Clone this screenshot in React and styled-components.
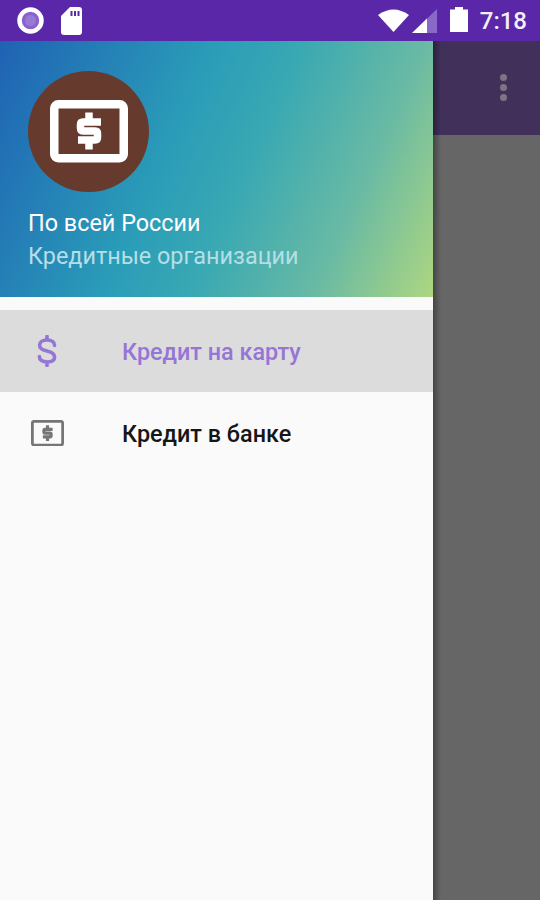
import React from "react";
import styled, { createGlobalStyle } from "styled-components";

const GlobalStyle = createGlobalStyle`
  html, body { margin: 0; padding: 0; background: #666; }
  * { box-sizing: border-box; }
`;

function CardIcon({ width, color, frame }) {
  return (
    <svg width={width} height={width * 0.8} viewBox="0 0 78 62.4" fill="none">
      <rect x={frame / 2} y={frame / 2} width={78 - frame} height={62.4 - frame} rx="4" stroke={color} strokeWidth={frame} />
      <path d="M51 22 H33 Q30.5 22 30.5 24.5 V28 Q30.5 31 33 31 H45 Q47.5 31 47.5 33.5 V37.5 Q47.5 40 45 40 H28 M39 12.5 V22 M39 40 V49.5" stroke={color} strokeWidth="7.5" />
    </svg>
  );
}

function DollarIcon() {
  return (
    <svg width="20" height="32" viewBox="0 0 20 32" fill="none">
      <path d="M17.6 10.4 C17.6 7 14.6 5 10 5 C5.4 5 2.6 7 2.6 10.2 C2.6 13.6 5.4 15 10 16 C14.6 17 17.6 18.6 17.6 22 C17.6 25.2 14.6 27 10 27 C5.4 27 2.4 25 2.4 21.6 M10 1.5 V5 M10 27 V30.5" stroke="#9575d6" strokeWidth="3.6" strokeLinecap="round" />
    </svg>
  );
}

export default function App() {
  return (
    <Page>
      <GlobalStyle />
      <StatusBar>
        <StatusLeft>
          <svg width="27" height="27" viewBox="0 0 27 27">
            <circle cx="13.5" cy="13.5" r="11" fill="#8a62cc" stroke="#fff" strokeWidth="4.5" />
            <circle cx="13.5" cy="13.5" r="5.5" fill="#9a78d6" />
          </svg>
          <svg width="21" height="28" viewBox="0 0 21 28">
            <path d="M9 0 H18 Q21 0 21 3 V25 Q21 28 18 28 H3 Q0 28 0 25 V9 Z" fill="#fff" />
            <path d="M10.5 4 V9 M14 4 V9 M17.5 4 V9" stroke="#5a27a8" strokeWidth="2" />
          </svg>
        </StatusLeft>
        <StatusRight>
          <svg width="31" height="23" viewBox="0 0 31 23">
            <path d="M0 6 Q15.5 -5 31 6 L15.5 23 Z" fill="#fff" />
          </svg>
          <SignalIcon width="25" height="24" viewBox="0 0 25 24">
            <path d="M0 24 L25 0 V24 Z" fill="#8a68c8" />
            <path d="M0 24 L15 9.6 V24 Z" fill="#fff" />
          </SignalIcon>
          <BatteryIcon width="18" height="25" viewBox="0 0 18 25">
            <path d="M5 0 H13 V2.5 H18 V25 H0 V2.5 H5 Z" fill="#fff" />
          </BatteryIcon>
          <Clock>7:18</Clock>
        </StatusRight>
      </StatusBar>
      <Body>
        <Drawer>
          <DrawerHeader>
            <Avatar>
              <CardIcon width={78} color="#fff" frame={8.5} />
            </Avatar>
            <HeaderTitle>По всей России</HeaderTitle>
            <HeaderSubtitle>Кредитные организации</HeaderSubtitle>
          </DrawerHeader>
          <Menu>
            <MenuItem $active>
              <MenuIcon $inset><DollarIcon /></MenuIcon>
              <MenuLabel $active>Кредит на карту</MenuLabel>
            </MenuItem>
            <MenuItem>
              <MenuIcon><CardIcon width={33} color="#757575" frame={6.5} /></MenuIcon>
              <MenuLabel>Кредит в банке</MenuLabel>
            </MenuItem>
          </Menu>
        </Drawer>
        <Backdrop>
          <AppBar>
            <MoreDots>
              <Dot />
              <Dot />
              <Dot />
            </MoreDots>
          </AppBar>
          <Scrim />
        </Backdrop>
      </Body>
    </Page>
  );
}

const Page = styled.div`
  width: 540px;
  height: 900px;
  display: flex;
  flex-direction: column;
  overflow: hidden;
  font-family: Roboto, "Noto Sans", sans-serif;
`;
const StatusBar = styled.div`
  height: 41px;
  flex: none;
  display: flex;
  align-items: center;
  justify-content: space-between;
  padding: 0 13px 0 17px;
  background: #5a27a8;
`;
const StatusLeft = styled.div`
  display: flex;
  align-items: center;
  gap: 17px;
`;
const StatusRight = styled.div`
  display: flex;
  align-items: center;
`;
const SignalIcon = styled.svg`
  margin-left: 3px;
`;
const BatteryIcon = styled.svg`
  margin-left: 13px;
  margin-top: -3px;
`;
const Clock = styled.span`
  margin-left: 12px;
  font-size: 24px;
  font-weight: 500;
  color: #f4effa;
`;
const Body = styled.div`
  flex: 1;
  display: flex;
  min-height: 0;
`;
const Drawer = styled.div`
  width: 433px;
  flex: none;
  display: flex;
  flex-direction: column;
  background: #fafafa;
`;
const DrawerHeader = styled.div`
  height: 256px;
  padding: 30px 0 0 28px;
  display: flex;
  flex-direction: column;
  background: linear-gradient(114deg, #1f62b4 0%, #2a9cb8 39%, #38a8b3 55%, #69baa4 78%, #aed680 100%);
`;
const Avatar = styled.div`
  width: 121px;
  height: 121px;
  border-radius: 50%;
  display: flex;
  align-items: center;
  justify-content: center;
  background: #663a2d;
`;
const HeaderTitle = styled.div`
  margin-top: 17px;
  font-size: 23.4px;
  line-height: 28px;
  color: #fff;
`;
const HeaderSubtitle = styled.div`
  margin-top: 5px;
  font-size: 23.4px;
  line-height: 28px;
  color: #b5dfe6;
`;
const Menu = styled.div`
  padding-top: 13px;
  display: flex;
  flex-direction: column;
`;
const MenuItem = styled.div`
  height: 82px;
  padding-left: 31px;
  display: flex;
  align-items: center;
  background: ${(p) => (p.$active ? "#dcdcdc" : "transparent")};
`;
const MenuIcon = styled.div`
  width: 91px;
  flex: none;
  display: flex;
  align-items: center;
  padding-left: ${(p) => (p.$inset ? "6px" : "0")};
`;
const MenuLabel = styled.span`
  margin-top: 2px;
  font-size: 23.4px;
  font-weight: 500;
  color: ${(p) => (p.$active ? "#9575d6" : "#161616")};
`;
const Backdrop = styled.div`
  position: relative;
  flex: 1;
  display: flex;
  flex-direction: column;
  /* drawer shadow falls over the app bar and the scrim */
  &::after {
    content: "";
    position: absolute;
    top: 0;
    bottom: 0;
    left: 0;
    width: 8px;
    background: linear-gradient(90deg, rgba(0, 0, 0, 0.32), rgba(0, 0, 0, 0));
  }
`;
const AppBar = styled.div`
  height: 94px;
  flex: none;
  display: flex;
  align-items: center;
  justify-content: flex-end;
  padding-right: 33px;
  background: #41305a;
`;
const MoreDots = styled.div`
  display: flex;
  flex-direction: column;
  gap: 3px;
  margin-top: -1px;
`;
const Dot = styled.div`
  width: 7px;
  height: 7px;
  border-radius: 50%;
  background: #7d7484;
`;
const Scrim = styled.div`
  flex: 1;
  background: #666;
`;
